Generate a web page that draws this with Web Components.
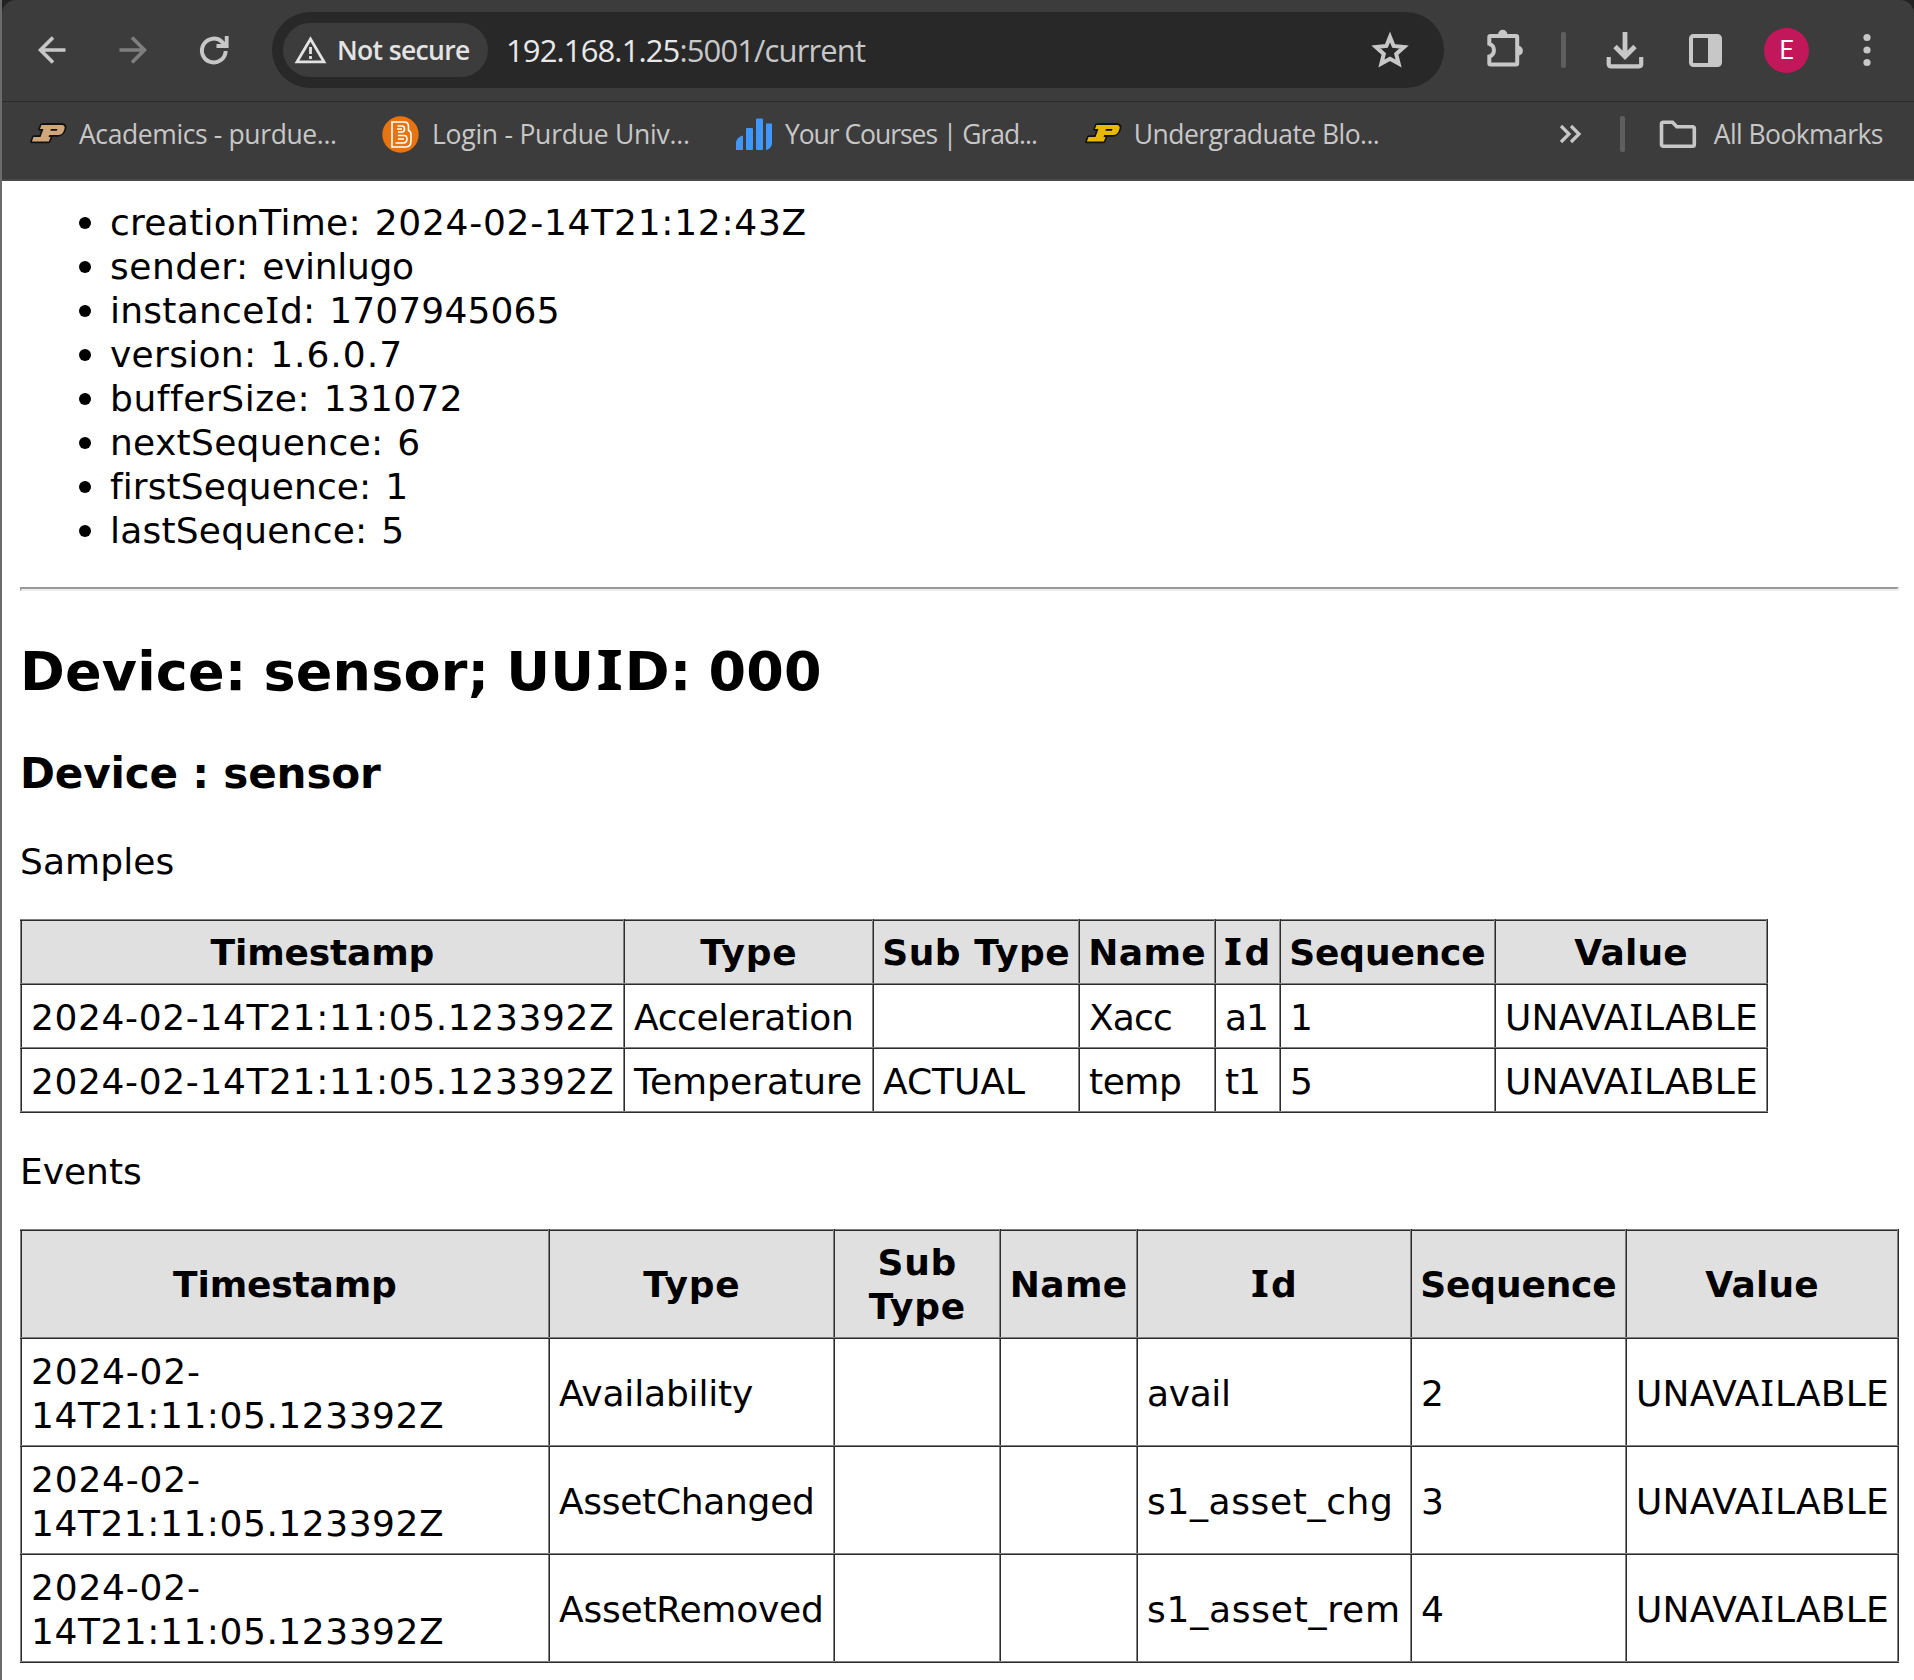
<!DOCTYPE html>
<html lang="en">
<head>
<meta charset="utf-8">
<title>192.168.1.25:5001/current</title>
<style>
html,body{margin:0;background:#fff}
body{font-family:"DejaVu Sans",Verdana,sans-serif;color:#000;width:1914px;height:1680px;overflow:hidden}
</style>
</head>
<body>
<browser-window>
  <browser-toolbar slot="chrome"></browser-toolbar>
  <bookmarks-bar slot="chrome"></bookmarks-bar>
  <stream-page></stream-page>
</browser-window>
<script>
/* Text run whose letter spacing is tuned so the inked glyphs span "w" pixels. */
const pen = document.createElement('canvas').getContext('2d');
class InkText extends HTMLElement {
  connectedCallback() {
    if (this.shadowRoot) return;
    this.attachShadow({mode:'open'}).innerHTML =
      `<style>:host{display:inline-block;white-space:pre}:host([line]){display:block}
      ::slotted(i){font:inherit;font-family:"Noto Sans",sans-serif;font-size:1.02em;line-height:0;
        display:inline-block;transform:scaleX(var(--serif-wide,1.08));margin:0 var(--serif-gap,.036em)}
      </style><span><slot></slot></span>`;
    const w = parseFloat(this.getAttribute('w'));
    const s = this.textContent;
    if (!w || s.length < 2) return;
    const cs = getComputedStyle(this);
    pen.font = `${cs.fontWeight} ${cs.fontSize} ${cs.fontFamily}`;
    const first = pen.measureText(s[0]), last = pen.measureText(s[s.length - 1]);
    const bearings = -first.actualBoundingBoxLeft + last.width - last.actualBoundingBoxRight;
    const natural = this.shadowRoot.querySelector('span').getBoundingClientRect().width;
    const gap = (w - (natural - bearings)) / (s.length - 1);
    this.style.letterSpacing = gap.toFixed(3) + 'px';
    this.style.marginRight = (-gap).toFixed(3) + 'px';
  }
}
const serifI = t => t.replace(/I/g, '<i>I</i>');

class BrowserWindow extends HTMLElement {
  constructor() {
    super();
    this.attachShadow({mode:'open'}).innerHTML = `<style>
      :host{display:flex;width:1914px;height:1680px;background:#fff}
      .edge{width:2px;flex:none;background:#6b6b6b}
      .col{flex:1;display:flex;flex-direction:column;min-width:0}
      header{height:181px;box-sizing:border-box;background:#3c3c3c;border-bottom:2px solid #4a474a;
        border-radius:14px 14px 0 0;flex:none}
      .back{background:#222;flex:none}
    </style><div class="edge"></div><div class="col"><div class="back"><header><slot name="chrome"></slot></header></div><slot></slot></div>`;
  }
}

const ICONS = {
  back:   ['28','28','<path d="M27.500 14H3M15 1.500 2.500 14 15 26.500" fill="none" stroke="currentColor" stroke-width="3.600"/>'],
  forward:['28','28','<path d="M.5 14H25M13 1.500 25.500 14 13 26.500" fill="none" stroke="currentColor" stroke-width="3.600"/>'],
  reload: ['29','29','<path d="M25.700 15A11.900 11.900 0 1 1 22.500 6.400L25 8.800" fill="none" stroke="currentColor" stroke-width="4"/><path d="M16.500 10H26.700V0" fill="none" stroke="currentColor" stroke-width="3.800"/>'],
  warn:   ['33','28','<path d="M16.500 3 3 25.800H30Z" fill="none" stroke="currentColor" stroke-width="2.800"/><path d="M16.500 11v7M16.500 20v3" stroke="currentColor" stroke-width="2.800"/>'],
  star:   ['38','36','<path d="M19 5 22.600 14 33 15 25.200 21.900 27.600 31.500 19 26.700 10.400 31.500 12.800 21.900 5 15 15.400 14Z" fill="none" stroke="currentColor" stroke-width="4"/>'],
  puzzle: ['38','38','<path d="M4.500 7H30a1.200 1.200 0 0 1 1.200 1.200V34.300a1.200 1.200 0 0 1-1.200 1.200H4.500a1.200 1.200 0 0 1-1.200-1.200V27.500a6.600 6.600 0 0 0 0-12.600V8.200A1.200 1.200 0 0 1 4.500 7Z" fill="none" stroke="currentColor" stroke-width="4"/><path d="M12 5.500a4.700 4.700 0 0 1 9.400 0ZM32 16.800a4.900 4.900 0 0 1 0 9.800Z" fill="currentColor"/>'],
  down:   ['38','37','<path d="M19 0V24M9 14.500 19 24.500 29 14.500" fill="none" stroke="currentColor" stroke-width="4.800"/><path d="M2.700 25V32.300a2 2 0 0 0 2 2H33.200a2 2 0 0 0 2-2V25" fill="none" stroke="currentColor" stroke-width="4.200"/>'],
  panel:  ['33','33','<rect x="2" y="2" width="29" height="29" rx="2.500" fill="none" stroke="currentColor" stroke-width="4"/><path d="M19 2H30V31H19Z" fill="currentColor"/>'],
  dots:   ['8','34','<g fill="currentColor"><circle cx="4" cy="4.500" r="3.600"/><circle cx="4" cy="17" r="3.600"/><circle cx="4" cy="29.500" r="3.600"/></g>'],
  more:   ['23','20','<path d="M2 2 10 10 2 18M12 2 20 10 12 18" fill="none" stroke="currentColor" stroke-width="3.200"/>'],
  folder: ['38','29','<path d="M4.300 2.300H13.500L17.800 6.800H33.500a1.800 1.800 0 0 1 1.800 1.800V24.500a1.800 1.800 0 0 1-1.800 1.800H4.300a1.800 1.800 0 0 1-1.800-1.800V4.100A1.800 1.800 0 0 1 4.300 2.300Z" fill="none" stroke="currentColor" stroke-width="3.600"/>'],
  bars:   ['37','33','<g fill="#3f97fb"><path d="M0 32V24q1-5 7-6.500V32Z"/><rect x="10" y="10" width="7" height="22" rx="1"/><rect x="20" y=".5" width="7" height="31.500" rx="1"/><path d="M30 5.500H36V26q-1 5-6 6Z"/></g>'],
  beta:   ['37','37','<circle cx="18.500" cy="18.500" r="18.200" fill="#e8740f"/><g fill="none" stroke="#fff" stroke-width="1.600"><path d="M10 6H22q4.500 0 4.500 4.500v4q2.500 1 2.500 4v6q0 6.500-5 6.500H10Z"/><path d="M15.500 10H20q2.500 0 2.500 3t-2.500 3H16M16 19.500h6q3 0 3 3.500t-3 4H13.500M15 13h5M16 23h6"/></g>'],
  train:  ['37','24','']
};
/* Athletic block mark built from slanted bars; drawn twice for its dark outline. */
const mark = fill => {
  const bars = '<rect x="12" y="3" width="20" height="4"/><rect x="15.500" y="3" width="8" height="16"/><rect x="8.500" y="15" width="17" height="4.500"/><rect x="18" y="3" width="18.500" height="10" rx="4"/>';
  return `<g transform="translate(1.500 0) skewX(-20)"><g fill="#111" stroke="#111" stroke-width="3.400" stroke-linejoin="round">${bars}</g><g fill="${fill}">${bars}</g><rect x="23" y="7" width="6.500" height="1.800" fill="#111"/></g>`;
};
class UiIcon extends HTMLElement {
  connectedCallback() {
    if (this.shadowRoot) return;
    const [w,h,body] = ICONS[this.getAttribute('name')];
    this.attachShadow({mode:'open'}).innerHTML =
      `<style>:host{display:block;flex:none}svg{display:block;overflow:visible}</style>
       <svg width="${w}" height="${h}" viewBox="0 0 ${w} ${h}">${body || mark(this.getAttribute('tone'))}</svg>`;
  }
}

class BrowserToolbar extends HTMLElement {
  constructor() {
    super();
    this.attachShadow({mode:'open'}).innerHTML = `<style>
      :host{display:flex;align-items:center;height:102px;box-sizing:border-box;padding:0 0 1px 36px;
        border-bottom:1px solid #2a2a2a;color:#c7c7c7;font-family:"Open Sans","Segoe UI",sans-serif}
      .off{color:#7e7e7e;margin-left:53px}
      .re{margin-left:53px}
      .box{margin-left:43px;width:1172px;height:76px;border-radius:38px;background:#282828;display:flex;
        align-items:center;box-sizing:border-box;padding:0 35px 0 11px}
      .chip{width:205px;height:54px;border-radius:27px;background:#3c3c3c;display:flex;align-items:center;
        box-sizing:border-box;padding-left:11px;color:#e3e3e3;font-weight:600;font-size:26.500px}
      .chip ink-text{margin-left:10px}
      .url{margin-left:18px;font-size:31px;flex:1;white-space:nowrap}
      b{font-weight:400;color:#e8e8e8}
      .bar{width:5px;height:36px;border-radius:2px;background:#5f5f5f}
      .av{width:45px;height:45px;border-radius:50%;background:#c2185b;color:#fff;font:25px/46px Roboto,sans-serif;text-align:center}
      ui-icon,.bar,.av,.box{flex:none}
    </style>
    <ui-icon name="back"></ui-icon><ui-icon class="off" name="forward"></ui-icon><ui-icon class="re" name="reload"></ui-icon>
    <div class="box">
      <div class="chip"><ui-icon name="warn" style="margin-top:-1px"></ui-icon><ink-text w="131">Not secure</ink-text></div>
      <div class="url"><ink-text w="358"><b>192.168.1.25</b>:5001/current</ink-text></div>
      <ui-icon name="star" style="margin-top:-1px"></ui-icon>
    </div>
    <ui-icon name="puzzle" style="margin-left:42px;margin-top:-4px"></ui-icon>
    <div class="bar" style="margin-left:37px"></div>
    <ui-icon name="down" style="margin-left:40px"></ui-icon>
    <ui-icon name="panel" style="margin-left:45px"></ui-icon>
    <div class="av" style="margin-left:42px">E</div>
    <ui-icon name="dots" style="margin-left:54px"></ui-icon>`;
  }
}

class BookmarkItem extends HTMLElement {
  constructor() {
    super();
    this.attachShadow({mode:'open'}).innerHTML = `<style>
      :host{display:flex;align-items:center;flex:none}
      .i{width:37px;display:flex;justify-content:center;margin-right:var(--gap,13px)}
    </style><div class="i"><slot name="icon"></slot></div><slot></slot>`;
  }
}
class BookmarksBar extends HTMLElement {
  constructor() {
    super();
    this.attachShadow({mode:'open'}).innerHTML = `<style>
      :host{display:flex;align-items:center;height:64px;color:#c7c7c7;font:26.500px/36px "Open Sans","Segoe UI",sans-serif;padding-left:27px}
      .bar{width:5px;height:36px;border-radius:2px;background:#5f5f5f;flex:none;margin-left:38px}
    </style>
    <bookmark-item><ui-icon slot="icon" name="train" tone="#cfa77a"></ui-icon><ink-text w="257">Academics - purdue...</ink-text></bookmark-item>
    <bookmark-item style="margin-left:45px"><ui-icon slot="icon" name="beta"></ui-icon><ink-text w="255">Login - Purdue Univ...</ink-text></bookmark-item>
    <bookmark-item style="margin-left:46px;--gap:12px"><ui-icon slot="icon" name="bars"></ui-icon><ink-text w="252">Your Courses | Grad...</ink-text></bookmark-item>
    <bookmark-item style="margin-left:46px"><ui-icon slot="icon" name="train" tone="#e8b900"></ui-icon><ink-text w="243">Undergraduate Blo...</ink-text></bookmark-item>
    <ui-icon name="more" style="margin-left:179px"></ui-icon>
    <div class="bar"></div>
    <bookmark-item style="margin-left:35px;--gap:17px"><ui-icon slot="icon" name="folder"></ui-icon><ink-text w="169">All Bookmarks</ink-text></bookmark-item>`;
  }
}

class DataTable extends HTMLElement {
  connectedCallback() {
    if (this.shadowRoot) return;
    const d = TABLES[this.getAttribute('source')];
    const cell = c => c.length ? c.map(([t,w]) => `<ink-text line w="${w||0}">${serifI(t)}</ink-text>`).join('') : '';
    const total = d.cols.reduce((a,b) => a + b, 0) + 2;
    this.attachShadow({mode:'open'}).innerHTML = `<style>
      :host{display:block}
      table{border-collapse:collapse;table-layout:fixed;width:${total}px;font-size:36px;line-height:44px}
      td,th{border:2px ridge gray;padding:11px 9px 7px;box-sizing:border-box;text-align:left;vertical-align:middle;height:${d.row}px}
      th{background:#e0e0e0;padding:10px 0 8px;text-align:center;--serif-gap:.05em;--serif-wide:1.25}
    </style><table><colgroup>${d.cols.map(w => `<col style="width:${w}px">`).join('')}</colgroup>
    <tr>${d.head.map(c => `<th>${cell(c)}</th>`).join('')}</tr>
    ${d.rows.map(r => `<tr>${r.map(c => `<td>${cell(c)}</td>`).join('')}</tr>`).join('')}</table>`;
  }
}
const H = (two) => [[['Timestamp',223]],[['Type',95]],two?[['Sub',76],['Type',95]]:[['Sub Type',184]],[['Name',113]],[['Id',40]],[['Sequence',193]],[['Value',112]]];
const UN = [['UNAVAILABLE',248]];
const TS = [['2024-02-14T21:11:05.123392Z',580]];
const TS2 = [['2024-02-',166],['14T21:11:05.123392Z',409]];
const TABLES = {
  samples:{cols:[603,249,206,136,65,215,272],row:64,head:H(false),rows:[
    [TS,[['Acceleration',217]],[],[['Xacc',81]],[['a1',39]],[['1']],UN],
    [TS,[['Temperature',228]],[['ACTUAL',142]],[['temp',91]],[['t1',33]],[['5']],UN]]},
  events:{cols:[528,285,166,137,274,215,272],row:108,head:H(true),rows:[
    [TS2,[['Availability',194]],[],[],[['avail',79]],[['2']],UN],
    [TS2,[['AssetChanged',253]],[],[],[['s1_asset_chg',242]],[['3']],UN],
    [TS2,[['AssetRemoved',262]],[],[],[['s1_asset_rem',250]],[['4']],UN]]}
};

class StreamPage extends HTMLElement {
  constructor() {
    super();
    const items = [
      ['creationTime:',245.5,'2024-02-14T21:12:43Z',429],
      ['sender:',133,'evinlugo',150],
      ['instanceId:',198,'1707945065',224.5],
      ['version:',141,'1.6.0.7',126],
      ['bufferSize:',192,'131072',133],
      ['nextSequence:',266,'6',0],
      ['firstSequence:',257,'1',0],
      ['lastSequence:',250,'5',0]];
    this.attachShadow({mode:'open'}).innerHTML = `<style>
      :host{display:block;padding:19px 15px 0 18px;font-size:36px;line-height:44px}
      ul{list-style:none;margin:0;padding:0 0 0 59px}
      li{display:flex;align-items:center;height:44px}
      li::before{content:"";width:12px;height:12px;border-radius:50%;background:#000;margin:2px 19px 0 0}
      li ink-text{margin-top:1px}
      li ink-text+ink-text{margin-left:14px}
      hr{margin:35px 0 0;height:0;border:2px solid;border-color:#9a9a9a #eee #eee #9a9a9a}
      h2{font-size:54px;line-height:66px;margin:48px 0 0;word-spacing:-2px;--serif-gap:.08em;--serif-wide:1.25}
      h3{font-size:42.120px;line-height:52px;margin:43px 0 0}
      h2,h3,p{display:flex}
      p{margin:40px 0 35px}
      p.e{margin-top:37px}
    </style>
    <ul>${items.map(([k,kw,v,vw]) => `<li><ink-text w="${kw}">${serifI(k)}</ink-text><ink-text w="${vw}">${v}</ink-text></li>`).join('')}</ul>
    <hr>
    <h2><ink-text w="795">${serifI('Device: sensor; UUID: 000')}</ink-text></h2>
    <h3><ink-text w="358">Device : sensor</ink-text></h3>
    <p><ink-text w="150.500">Samples</ink-text></p>
    <data-table source="samples"></data-table>
    <p class="e"><ink-text w="117">Events</ink-text></p>
    <data-table source="events"></data-table>`;
  }
}
customElements.define('browser-window', BrowserWindow);
customElements.define('browser-toolbar', BrowserToolbar);
customElements.define('bookmark-item', BookmarkItem);
customElements.define('bookmarks-bar', BookmarksBar);
customElements.define('ui-icon', UiIcon);
customElements.define('data-table', DataTable);
customElements.define('stream-page', StreamPage);
customElements.define('ink-text', InkText);
</script>
</body>
</html>
